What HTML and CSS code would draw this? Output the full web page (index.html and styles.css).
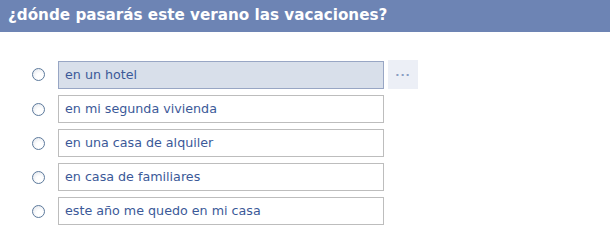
FILE: index.html
```html
<!DOCTYPE html>
<html lang="es">
<head>
  <meta charset="UTF-8">
  <title>Encuesta</title>
  <link rel="stylesheet" href="styles.css">
</head>
<body>
  <h1 class="question">¿dónde pasarás este verano las vacaciones?</h1>

  <div class="options">
    <div class="option">
      <span class="radio"></span>
      <div class="answer selected">en un hotel</div>
      <div class="more">...</div>
    </div>
    <div class="option">
      <span class="radio"></span>
      <div class="answer">en mi segunda vivienda</div>
    </div>
    <div class="option">
      <span class="radio"></span>
      <div class="answer">en una casa de alquiler</div>
    </div>
    <div class="option">
      <span class="radio"></span>
      <div class="answer">en casa de familiares</div>
    </div>
    <div class="option">
      <span class="radio"></span>
      <div class="answer">este año me quedo en mi casa</div>
    </div>
  </div>
</body>
</html>
```

FILE: styles.css
```css
body {
  margin: 0;
  background: #fff;
  font-family: "DejaVu Sans", Verdana, sans-serif;
}
.question {
  margin: 0;
  height: 32px;
  line-height: 31px;
  padding-left: 8px;
  background: #6d84b4;
  color: #fff;
  font-size: 15.2px;
  font-weight: bold;
}
.options {
  padding: 28px 0 0 32px;
  display: flex;
  flex-direction: column;
  gap: 6px;
}
.option {
  display: flex;
  align-items: center;
}
.radio {
  width: 13px;
  height: 13px;
  box-sizing: border-box;
  border: 1px solid #5d7a9c;
  border-radius: 50%;
  background: radial-gradient(circle at 60% 65%, #fff 30%, #dfe3ea 100%);
  margin-right: 13px;
}
.answer {
  width: 326px;
  height: 28px;
  box-sizing: border-box;
  border: 1px solid #bdbdbd;
  padding-left: 6px;
  line-height: 26px;
  font-size: 12.7px;
  color: #3b5998;
}
.answer.selected {
  background: #d8dfea;
  border-color: #98a6c4;
}
.more {
  width: 30px;
  height: 29px;
  margin-left: 4px;
  background: #eceff6;
  color: #8b9dc3;
  font-size: 11px;
  font-weight: bold;
  text-align: center;
  line-height: 26px;
  letter-spacing: 1px;
}
```
